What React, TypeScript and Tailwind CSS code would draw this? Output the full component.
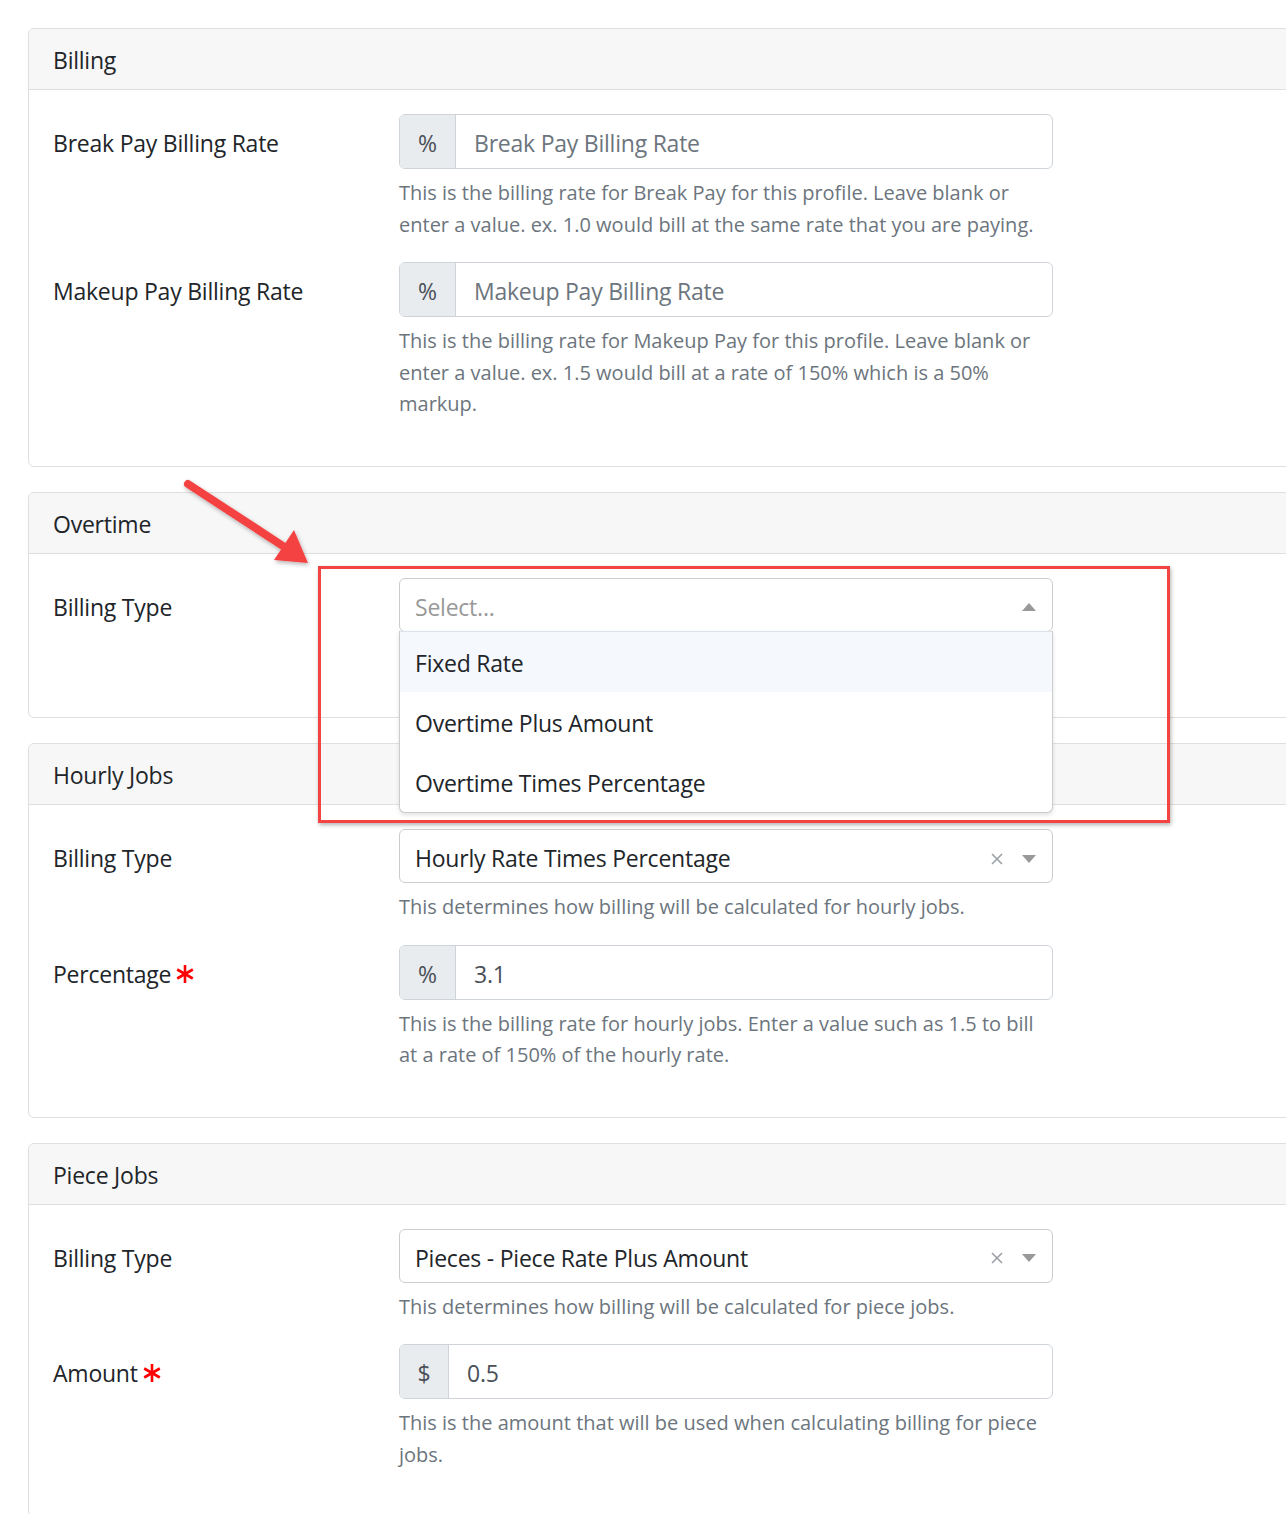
import React from 'react';

const font = "font-['Open_Sans','Segoe_UI',sans-serif]";
// Open Sans runs wider than the original face, so sizes are trimmed a little
const big = 'text-[23px] tracking-[-0.01em]';
const small = 'text-[20px]';

const Asterisk = () => (
  <svg width="18" height="20" viewBox="0 0 18 20" className="ml-[5px] inline-block">
    <g stroke="#ff0000" strokeWidth="2.6" strokeLinecap="butt">
      <line x1="9" y1="1" x2="9" y2="19" />
      <line x1="1.2" y1="5.5" x2="16.8" y2="14.5" />
      <line x1="1.2" y1="14.5" x2="16.8" y2="5.5" />
    </g>
  </svg>
);

const Card: React.FC<{ title: string; children: React.ReactNode }> = ({ title, children }) => (
  <div className="mb-[25px] w-[1300px] rounded-[6px] border border-[#dfdfdf] bg-white">
    <div className={`flex h-[61px] items-center rounded-t-[6px] border-b border-[#dfdfdf] bg-[#f7f7f7] px-[24px] pt-[3px] text-[#212529] ${big}`}>
      {title}
    </div>
    <div className="px-[24px] pt-[24px] pb-[24px]">{children}</div>
  </div>
);

const Row: React.FC<{ label: string; required?: boolean; children: React.ReactNode }> = ({ label, required, children }) => (
  <div className="mb-[22px] flex">
    <div className={`w-[346px] pt-[11px] leading-[36px] text-[#212529] ${big}`}>
      <span className="inline-flex items-center">
        {label}
        {required && <Asterisk />}
      </span>
    </div>
    <div className="w-[654px]">{children}</div>
  </div>
);

const Help: React.FC<{ children: React.ReactNode }> = ({ children }) => (
  <p className={`mt-[8px] leading-[31.5px] text-[#6c757d] ${small}`}>{children}</p>
);

const AddonInput: React.FC<{ addon: string; addonW: string; placeholder?: string; value?: string }> = ({ addon, addonW, placeholder, value }) => (
  <div className="flex h-[55px] overflow-hidden rounded-[6px] border border-[#ced4da]">
    <div className={`flex items-center justify-center border-r border-[#ced4da] bg-[#e9ecef] pt-[4px] text-[#495057] ${big} ${addonW}`}>{addon}</div>
    <div className={`flex flex-1 items-center px-[18px] pt-[4px] ${big}`}>
      {value ? <span className="text-[#495057]">{value}</span> : <span className="text-[#6c757d]">{placeholder}</span>}
    </div>
  </div>
);

const Caret = ({ up }: { up?: boolean }) => (
  <svg width="14" height="8" viewBox="0 0 14 8">
    {up ? <polygon points="0,8 14,8 7,0" fill="#999" /> : <polygon points="0,0 14,0 7,8" fill="#999" />}
  </svg>
);

const Clear = () => (
  <svg width="12" height="12" viewBox="0 0 12 12">
    <g stroke="#9aa0a6" strokeWidth="1.6">
      <line x1="1" y1="1" x2="11" y2="11" />
      <line x1="11" y1="1" x2="1" y2="11" />
    </g>
  </svg>
);

const SelectBox: React.FC<{ value: string }> = ({ value }) => (
  <div className={`flex h-[54px] items-center rounded-[6px] border border-[#cccccc] pl-[15px] pr-[16px] pt-[5px] text-[#212529] ${big}`}>
    <span className="flex-1">{value}</span>
    <span className="mr-[19px] flex items-center"><Clear /></span>
    <Caret />
  </div>
);

const OpenSelect = () => (
  <div className="relative">
    <div className={`flex h-[54px] items-center rounded-[6px] border border-[#cccccc] pl-[15px] pr-[16px] pt-[5px] ${big}`}>
      <span className="flex-1 text-[#999999]">Select...</span>
      <Caret up />
    </div>
    <div className="absolute left-0 top-[53px] z-10 w-full rounded-b-[6px] border border-t-0 border-[#cccccc] bg-white shadow-[0_2px_4px_rgba(0,0,0,0.12)]">
      <div className="border-t border-[#dde3ea]" />
      {['Fixed Rate', 'Overtime Plus Amount', 'Overtime Times Percentage'].map((o, i) => (
        <div key={o} className={`flex h-[60px] items-center px-[15px] pt-[4px] text-[#212529] ${big} ${i === 0 ? 'bg-[#f5f9fd]' : ''}`}>{o}</div>
      ))}
    </div>
  </div>
);

export default function App() {
  return (
    <div className={`relative h-[1514px] w-[1286px] overflow-hidden bg-white pl-[28px] pt-[28px] ${font}`}>
      <Card title="Billing">
        <Row label="Break Pay Billing Rate">
          <AddonInput addon="%" addonW="w-[56px]" placeholder="Break Pay Billing Rate" />
          <Help>This is the billing rate for Break Pay for this profile. Leave blank or enter a value. ex. 1.0 would bill at the same rate that you are paying.</Help>
        </Row>
        <Row label="Makeup Pay Billing Rate">
          <AddonInput addon="%" addonW="w-[56px]" placeholder="Makeup Pay Billing Rate" />
          <Help>This is the billing rate for Makeup Pay for this profile. Leave blank or enter a value. ex. 1.5 would bill at a rate of 150% which is a 50% markup.</Help>
        </Row>
      </Card>

      <Card title="Overtime">
        <Row label="Billing Type">
          <OpenSelect />
          {/* help line sits under the open menu */}
          <div className="mt-[8px] h-[31.5px]" />
        </Row>
      </Card>

      <Card title="Hourly Jobs">
        <Row label="Billing Type">
          <SelectBox value="Hourly Rate Times Percentage" />
          <Help>This determines how billing will be calculated for hourly jobs.</Help>
        </Row>
        <Row label="Percentage" required>
          <AddonInput addon="%" addonW="w-[56px]" value="3.1" />
          <Help>This is the billing rate for hourly jobs. Enter a value such as 1.5 to bill at a rate of 150% of the hourly rate.</Help>
        </Row>
      </Card>

      <Card title="Piece Jobs">
        <Row label="Billing Type">
          <SelectBox value="Pieces - Piece Rate Plus Amount" />
          <Help>This determines how billing will be calculated for piece jobs.</Help>
        </Row>
        <Row label="Amount" required>
          <AddonInput addon="$" addonW="w-[49px]" value="0.5" />
          <Help>This is the amount that will be used when calculating billing for piece jobs.</Help>
        </Row>
      </Card>

      {/* annotation: arrow */}
      <svg className="absolute left-[170px] top-[468px] z-20" width="160" height="115" viewBox="0 0 160 115">
        <defs>
          <filter id="sh" x="-20%" y="-20%" width="140%" height="140%">
            <feDropShadow dx="1" dy="2" stdDeviation="2" floodColor="#000" floodOpacity="0.3" />
          </filter>
        </defs>
        <g filter="url(#sh)">
          <line x1="18" y1="16" x2="116" y2="80" stroke="#f44343" strokeWidth="8" strokeLinecap="round" />
          <polygon points="138,95 104,92 124,62" fill="#f44343" />
        </g>
      </svg>

      {/* annotation: highlight box */}
      <div className="absolute left-[318px] top-[566px] z-20 h-[257px] w-[852px] border-[3px] border-[#f44343] shadow-[1px_2px_4px_rgba(0,0,0,0.3)]" />
    </div>
  );
}
